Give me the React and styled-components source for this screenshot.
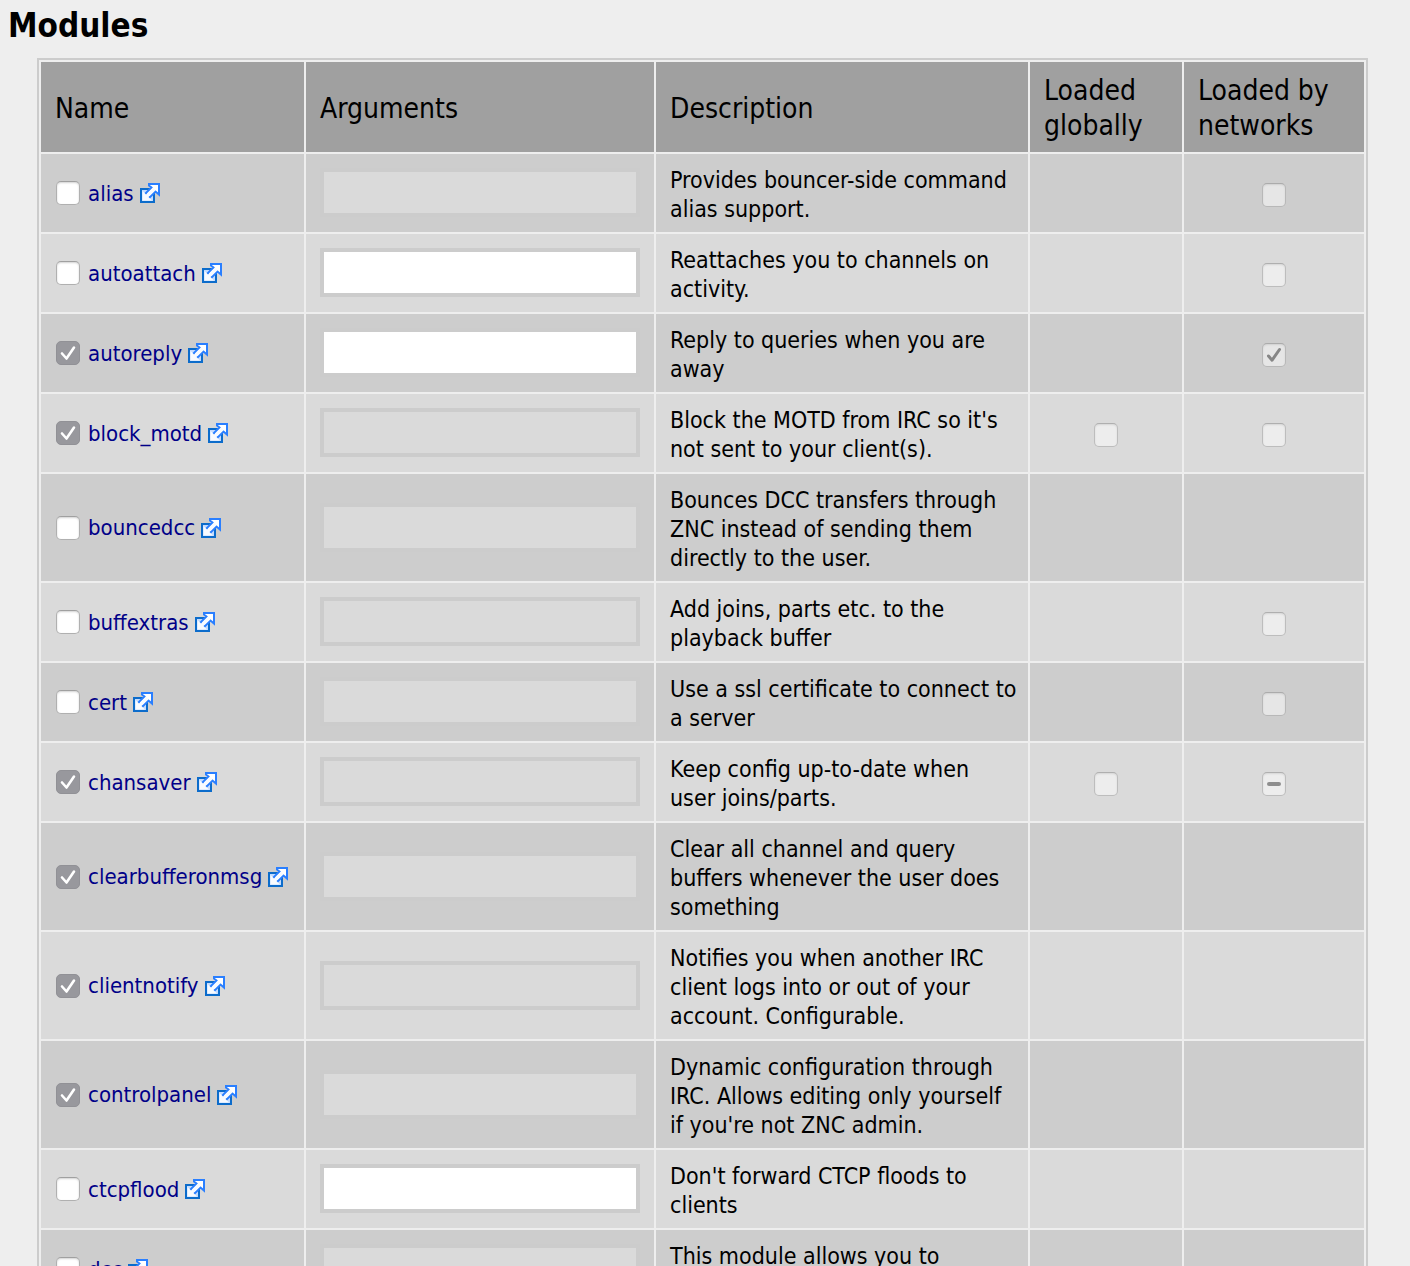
import React from "react";
import styled, { createGlobalStyle, css } from "styled-components";

const GlobalStyle = createGlobalStyle`
  body {
    margin: 0;
    background: #eeeeee;
    color: #000000;
    font-family: Tahoma, "DejaVu Sans Condensed", "DejaVu Sans", sans-serif;
    font-size: 23px;
    line-height: 29px;
  }
`;

const Section = styled.section`
  padding: 6px 42px 24px 8px;
`;

const Heading = styled.h3`
  margin: 0 0 12px;
  font-size: 33px;
  line-height: 40px;
  font-weight: bold;
`;

const ModuleTable = styled.table`
  width: calc(100% - 29px);
  margin-left: 29px;
  table-layout: fixed;
  border: 2px solid #cccccc;
  border-collapse: separate;
  border-spacing: 2px;
`;

const Column = styled.col`
  width: ${(p) => p.$width || "auto"};
`;

const HeaderCell = styled.th`
  padding: 11px 14px 9px;
  background: #a0a0a0;
  font-size: 28px;
  line-height: 35px;
  font-weight: normal;
  text-align: left;
  vertical-align: middle;
`;

const Row = styled.tr`
  background: #cdcdcd;
  &:nth-child(even) {
    background: #dadada;
  }
`;

const Cell = styled.td`
  padding: 10px 14px;
  vertical-align: middle;
`;

const DescriptionCell = styled(Cell)`
  padding: 12px 10px 8px 14px;
`;

const StatusCell = styled(Cell)`
  padding: 14px 14px 10px;
  line-height: 0;
  text-align: center;
`;

const NameLine = styled.div`
  display: flex;
  align-items: center;
  gap: 8px;
  padding-left: 1px;
`;

const ModuleLink = styled.a`
  display: inline-flex;
  align-items: center;
  gap: 6px;
  color: #000088;
  font-size: 22px;
  text-decoration: none;
  white-space: nowrap;
`;

const ArgumentInput = styled.input`
  display: block;
  box-sizing: border-box;
  width: 100%;
  height: 49px;
  margin: 0 0 1px;
  padding: 4px 8px;
  border: 4px solid #cccccc;
  border-radius: 0;
  background: #ffffff;
  font: inherit;
  &:disabled {
    background: #dadada;
  }
`;

const BoxFrame = styled.span`
  display: inline-grid;
  flex: none;
  width: 24px;
  height: 24px;
  & > * {
    grid-area: 1 / 1;
  }
`;

const BoxInput = styled.input`
  appearance: none;
  box-sizing: border-box;
  width: 24px;
  height: 24px;
  margin: 0;
  border: 1px solid #b0b0b0;
  border-top-color: #a0a0a0;
  border-radius: 5px;
  background: #ffffff;
  box-shadow: inset 0 1px 2px rgba(0, 0, 0, 0.18);
  ${(p) =>
    p.$filled &&
    css`
      border-color: #919196;
      background: #98989d;
      box-shadow: none;
    `}
  &:disabled {
    border-color: rgba(0, 0, 0, 0.2);
    border-top-color: rgba(0, 0, 0, 0.26);
    background: rgba(255, 255, 255, 0.5);
    box-shadow: inset 0 1px 2px rgba(0, 0, 0, 0.1);
  }
`;

const Mark = styled.svg`
  width: 24px;
  height: 24px;
  fill: none;
  stroke: ${(p) => p.$color};
  stroke-width: ${(p) => p.$weight};
  stroke-linecap: round;
  stroke-linejoin: round;
  pointer-events: none;
`;

function CheckBox({ state, locked, label, id }) {
  const [on, setOn] = React.useState(state === "on");
  const mixed = state === "mixed";
  const setMixed = (node) => {
    if (node) node.indeterminate = mixed;
  };
  return (
    <BoxFrame>
      <BoxInput
        type="checkbox"
        id={id}
        ref={setMixed}
        checked={on}
        disabled={locked}
        $filled={on && !locked}
        aria-label={label}
        onChange={(e) => setOn(e.target.checked)}
      />
      {on && (
        <Mark viewBox="0 0 24 24" $color={locked ? "#868686" : "#ffffff"} $weight={locked ? 3 : 2.6} aria-hidden="true">
          <path d={locked ? "M6.5 13l3.6 4.2L17.500 6.500" : "M6 12.500L10.500 17.500L18 6.500"} />
        </Mark>
      )}
      {mixed && (
        <Mark viewBox="0 0 24 24" $color="#8e8e8e" $weight={4} aria-hidden="true">
          <path d="M7 12h10" />
        </Mark>
      )}
    </BoxFrame>
  );
}

const IconSvg = styled.svg`
  width: 20px;
  height: 20px;
  flex: none;
`;

function ExternalIcon() {
  return (
    <IconSvg viewBox="0 0 20 20" aria-hidden="true">
      <path d="M1 6h13v13H1z" fill="#c4dcff" stroke="#0c6ccb" strokeWidth="2" />
      <path d="M9 1H19V11.500L15.500 8.500L9.500 14.500L5.500 10.500L11.500 4.500L9 2.500Z" fill="#ffffff" stroke="#2a7fff" strokeWidth="2" />
      <path d="M2.500 8L6 11.500L13 4.500L15.500 7L8.500 14L12 17.500H2.500Z" fill="#f8fbff" />
    </IconSvg>
  );
}

const modules = [
  { name: "alias", user: "off", args: false, text: "Provides bouncer-side command alias support.", net: "off" },
  { name: "autoattach", user: "off", args: true, text: "Reattaches you to channels on activity.", net: "off" },
  { name: "autoreply", user: "on", args: true, text: "Reply to queries when you are away", net: "on" },
  { name: "block_motd", user: "on", args: false, text: "Block the MOTD from IRC so it's not sent to your client(s).", global: "off", net: "off" },
  { name: "bouncedcc", user: "off", args: false, text: "Bounces DCC transfers through ZNC instead of sending them directly to the user." },
  { name: "buffextras", user: "off", args: false, text: "Add joins, parts etc. to the playback buffer", net: "off" },
  { name: "cert", user: "off", args: false, text: "Use a ssl certificate to connect to a server", net: "off" },
  { name: "chansaver", user: "on", args: false, text: "Keep config up-to-date when user joins/parts.", global: "off", net: "mixed" },
  { name: "clearbufferonmsg", user: "on", args: false, text: "Clear all channel and query buffers whenever the user does something" },
  { name: "clientnotify", user: "on", args: false, text: "Notifies you when another IRC client logs into or out of your account. Configurable." },
  { name: "controlpanel", user: "on", args: false, text: "Dynamic configuration through IRC. Allows editing only yourself if you're not ZNC admin." },
  { name: "ctcpflood", user: "off", args: true, text: "Don't forward CTCP floods to clients" },
  { name: "dcc", user: "off", args: false, text: "This module allows you to transfer files to and from ZNC" },
];

function ModuleRow({ mod }) {
  return (
    <Row>
      <Cell>
        <NameLine>
          <CheckBox state={mod.user} label={mod.name} id={`mod-${mod.name}`} />
          <ModuleLink href={`#${mod.name}`}>
            {mod.name}
            <ExternalIcon />
          </ModuleLink>
        </NameLine>
      </Cell>
      <Cell>
        <ArgumentInput type="text" disabled={!mod.args} aria-label={`${mod.name} arguments`} />
      </Cell>
      <DescriptionCell>{mod.text}</DescriptionCell>
      <StatusCell>
        {mod.global && <CheckBox state={mod.global} locked label={`${mod.name} loaded globally`} />}
      </StatusCell>
      <StatusCell>
        {mod.net && <CheckBox state={mod.net} locked label={`${mod.name} loaded by networks`} />}
      </StatusCell>
    </Row>
  );
}

export default function App() {
  return (
    <Section>
      <GlobalStyle />
      <Heading>Modules</Heading>
      <ModuleTable>
        <colgroup>
          <Column $width="263px" />
          <Column $width="348px" />
          <Column />
          <Column $width="152px" />
          <Column $width="180px" />
        </colgroup>
        <thead>
          <tr>
            <HeaderCell scope="col">Name</HeaderCell>
            <HeaderCell scope="col">Arguments</HeaderCell>
            <HeaderCell scope="col">Description</HeaderCell>
            <HeaderCell scope="col">Loaded globally</HeaderCell>
            <HeaderCell scope="col">Loaded by networks</HeaderCell>
          </tr>
        </thead>
        <tbody>
          {modules.map((mod) => (
            <ModuleRow key={mod.name} mod={mod} />
          ))}
        </tbody>
      </ModuleTable>
    </Section>
  );
}
